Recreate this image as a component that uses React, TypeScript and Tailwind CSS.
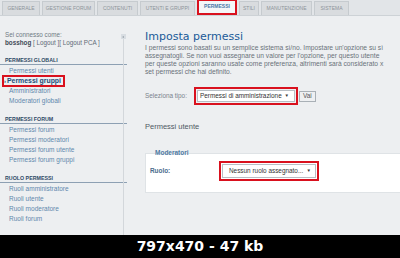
import React from "react";

const tabs: { t: string; w: number }[] = [
  { t: "GENERALE", w: 38 },
  { t: "GESTIONE FORUM", w: 53 },
  { t: "CONTENUTI", w: 41 },
  { t: "UTENTI E GRUPPI", w: 55 },
  { t: "PERMESSI", w: 40 },
  { t: "STILI", w: 20 },
  { t: "MANUTENZIONE", w: 51 },
  { t: "SISTEMA", w: 35 },
];

function Section({ title, items, active }: { title: string; items: string[]; active?: string }) {
  return (
    <div className="flex flex-col">
      <div className="h-[9px] pl-[5px] text-[5.3px] font-bold text-[#2e4a66] leading-[8px] border-b border-[#8da0b3] mr-[-7px] whitespace-nowrap">{title}</div>
      <div className="flex flex-col pt-[1px]">
        {items.map((it) =>
          it === active ? (
            <div key={it} className="h-[10px] flex items-center">
              <div className="ml-[2px] w-[63px] h-[12px] border-2 border-[#d9111e] flex items-center pl-[0px] text-[6.9px] font-bold text-[#1d4a78] leading-none whitespace-nowrap overflow-hidden">
                <span className="text-[6px] mr-[1px]">›</span>{it}
              </div>
            </div>
          ) : (
            <div key={it} className="h-[10px] leading-[10px] pl-[9px] text-[6.5px] text-[#5f88ad] whitespace-nowrap">{it}</div>
          )
        )}
      </div>
    </div>
  );
}

export default function App() {
  return (
    <div className="w-[400px] h-[258px] overflow-hidden flex flex-col" style={{ fontFamily: "'Liberation Sans', Arial, sans-serif" }}>
      <div className="h-[235px] bg-[#edeff1] flex flex-col overflow-hidden">
        <div className="h-[16px] bg-[#e2e5e8] flex items-end pl-[2px] gap-[2px] border-b border-[#cdd2d6]">
          {tabs.map(({ t, w }) =>
            t === "PERMESSI" ? (
              <div key={t} style={{ width: w }} className="h-[16px] border-2 border-[#d9111e] bg-[#f4f6f8] flex items-center justify-center text-[5px] text-[#4a78a8] font-bold whitespace-nowrap">{t}</div>
            ) : (
              <div key={t} style={{ width: w }} className="h-[14px] bg-[#d9dcdf] border border-b-0 border-[#c6cbcf] flex items-center justify-center text-[5px] text-[#8d949a] whitespace-nowrap">{t}</div>
            )
          )}
        </div>
        <div className="flex flex-1">
          <div className="w-[120px] flex flex-col pt-[15px]">
            <div className="pl-[5px] text-[6.3px] leading-[8px] whitespace-nowrap">
              <div className="text-[#6f7a84]">Sei connesso come:</div>
              <div className="text-[#5f6b76]"><span className="font-bold text-[#3f4a55]">bosshog</span> [ Logout ][ Logout PCA ]</div>
            </div>
            <div className="flex flex-col gap-[9px] mt-[9px]">
              <Section title="PERMESSI GLOBALI" items={["Permessi utenti", "Permessi gruppi", "Amministratori", "Moderatori globali"]} active="Permessi gruppi" />
              <Section title="PERMESSI FORUM" items={["Permessi forum", "Permessi moderatori", "Permessi forum utente", "Permessi forum gruppi"]} />
              <Section title="RUOLO PERMESSI" items={["Ruoli amministratore", "Ruoli utente", "Ruoli moderatore", "Ruoli forum"]} />
            </div>
          </div>
          <div className="w-[6px] flex flex-col items-center pt-[18px]">
            <div className="w-[5px] h-[5px] bg-[#d8dde2] flex items-center justify-center"><div className="w-0 h-0 border-y-[1.5px] border-y-transparent border-r-[2px] border-r-[#9aa3ab]" /></div>
            <div className="w-px flex-1 bg-[#d3d7db]" />
          </div>
          <div className="flex-1 pl-[19px] pt-[14px] flex flex-col overflow-hidden">
            <div className="text-[11px] leading-[14px] text-[#1a5a98] whitespace-nowrap" style={{ fontFamily: "'DejaVu Sans', sans-serif" }}>Imposta permessi</div>
            <div className="text-[6.7px] leading-[8px] text-[#6a727a] whitespace-nowrap">
              <div>I permessi sono basati su un semplice sistema sì/no. Impostare un'opzione su sì</div>
              <div>assegnatogli. Se non vuoi assegnare un valore per l'opzione, per questo utente</div>
              <div>per queste opzioni saranno usate come preferenza, altrimenti sarà considerato x</div>
              <div>set permessi che hai definito.</div>
            </div>
            <div className="flex items-center mt-[11px] text-[6.4px] whitespace-nowrap">
              <span className="text-[#7a838c] w-[49px]">Seleziona tipo:</span>
              <div className="border-2 border-[#d9111e] p-[1px] h-[18px] w-[104px] flex items-center">
                <div className="bg-white border border-[#b8bec4] h-full flex-1 flex items-center justify-between px-[2px] text-[#333]">
                  <span>Permessi di amministrazione</span>
                  <span className="text-[4.5px] mr-[3px]">▼</span>
                </div>
              </div>
              <div className="ml-[1px] h-[11px] px-[3px] border border-[#a9b0b6] bg-[#eef0f2] text-[#555] flex items-center">Vai</div>
            </div>
            <div className="mt-[16px] text-[7.5px] text-[#4f5a64] whitespace-nowrap">Permessi utente</div>
            <div className="mt-[21px] relative bg-white border border-[#dfe3e6] h-[40px] w-[300px]">
              <div className="absolute -top-[5px] left-[8px] px-[1px] text-[6.5px] font-bold text-[#4f7aa3] leading-[8px]">Moderatori</div>
              <div className="flex items-center pt-[7px] pl-[4px] text-[6.4px] whitespace-nowrap">
                <span className="text-[#4a6b8c] font-bold w-[69px]">Ruolo:</span>
                <div className="border-2 border-[#d9111e] p-[1px] h-[20px] w-[100px] flex items-center">
                  <div className="bg-white border border-[#b8bec4] h-full flex-1 flex items-center justify-between pl-[6px] pr-[4px] text-[#333]">
                    <span>Nessun ruolo assegnato...</span>
                    <span className="text-[4.5px]">▼</span>
                  </div>
                </div>
              </div>
            </div>
          </div>
        </div>
      </div>
      <div className="h-[23px] bg-black flex items-center justify-center text-white font-bold text-[14px]" style={{ fontFamily: "'DejaVu Sans', sans-serif" }}>
        797x470 - 47 kb
      </div>
    </div>
  );
}
